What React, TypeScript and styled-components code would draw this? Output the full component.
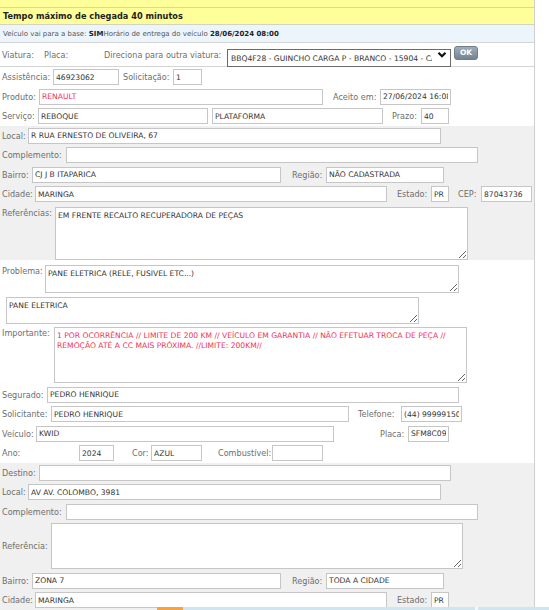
import React from "react";
import styled, { createGlobalStyle } from "styled-components";

const GlobalStyle = createGlobalStyle`
  html, body {
    margin: 0;
    padding: 0;
    background: #ffffff;
  }
  body {
    font-family: "DejaVu Sans", Verdana, sans-serif;
  }
`;

const Panel = styled.div`
  width: 534px;
  min-height: 610px;
  border-right: 1px solid #cfcfcf;
  font-family: "DejaVu Sans", Verdana, sans-serif;
`;

const TopBand = styled.div`
  height: 7px;
  background: #ffff99;
  border-bottom: 1px solid #d3d3c4;
`;

const Header = styled.div`
  height: 16px;
  display: flex;
  align-items: center;
  padding-left: 3px;
  background: #ffff99;
  border-bottom: 1px solid #d3d3c4;
  font-size: 8.2px;
  font-weight: bold;
  color: #222;
`;

const InfoBar = styled.div`
  height: 17px;
  display: flex;
  align-items: center;
  padding-left: 3px;
  background: #edf5fc;
  border-bottom: 1px solid #d4d4d4;
  font-size: 7px;
  color: #555;
  white-space: nowrap;
`;

const Strong = styled.b`
  color: #222;
`;

const ViaturaBar = styled.div`
  height: 23px;
  display: flex;
  align-items: center;
  border-bottom: 1px solid #d4d4d4;
`;

const Section = styled.div<{ $grey?: boolean; $pt?: number }>`
  background: ${(p) => (p.$grey ? "#f0f0f0" : "#ffffff")};
  padding-top: ${(p) => p.$pt ?? 0}px;
`;

const Row = styled.div<{ $h?: number; $top?: boolean; $mt?: number; $mb?: number }>`
  display: flex;
  align-items: ${(p) => (p.$top ? "flex-start" : "center")};
  height: ${(p) => p.$h ?? 19.5}px;
  margin-top: ${(p) => p.$mt ?? 0}px;
  margin-bottom: ${(p) => p.$mb ?? 0}px;
`;

const Label = styled.span<{ $ml?: number; $w: number; $pt?: number }>`
  flex: none;
  margin-left: ${(p) => p.$ml ?? 2}px;
  width: ${(p) => p.$w}px;
  padding-top: ${(p) => p.$pt ?? 0}px;
  font-size: 8.1px;
  color: #6e6e6e;
  white-space: nowrap;
`;

const Field = styled.input<{ $w: number; $ml?: number; $red?: boolean }>`
  flex: none;
  box-sizing: border-box;
  width: ${(p) => p.$w}px;
  height: 16px;
  margin: 0 0 0 ${(p) => p.$ml ?? 0}px;
  padding: 0 2px;
  border: 1px solid #c6c6c6;
  border-radius: 0;
  background: #fff;
  font-family: "DejaVu Sans", Verdana, sans-serif;
  font-size: 7.6px;
  color: ${(p) => (p.$red ? "#ee3355" : "#333")};
  outline: none;
`;

const Area = styled.textarea<{ $w: number; $h: number; $ml?: number; $red?: boolean }>`
  flex: none;
  box-sizing: border-box;
  width: ${(p) => p.$w}px;
  height: ${(p) => p.$h}px;
  margin: 0 0 0 ${(p) => p.$ml ?? 0}px;
  padding: 2.5px 2px;
  border: 1px solid #c6c6c6;
  background: #fff;
  font-family: "DejaVu Sans", Verdana, sans-serif;
  font-size: 7.6px;
  line-height: 10px;
  color: ${(p) => (p.$red ? "#ee3355" : "#333")};
  outline: none;
`;

const SelectWrap = styled.div`
  position: relative;
  flex: none;
  width: 224px;
  height: 18px;
`;

const Select = styled.select`
  box-sizing: border-box;
  width: 100%;
  height: 100%;
  margin: 0;
  padding: 0 18px 0 3px;
  border: 1px solid #6b6b6b;
  border-radius: 0;
  background: #fff;
  appearance: none;
  font-family: "DejaVu Sans", Verdana, sans-serif;
  font-size: 7.6px;
  color: #333;
  outline: none;
`;

const Chevron = styled.svg`
  position: absolute;
  right: 4px;
  top: 5px;
  pointer-events: none;
`;

const OkButton = styled.button`
  flex: none;
  align-self: flex-start;
  box-sizing: border-box;
  width: 24px;
  height: 14px;
  margin: 3px 0 0 3px;
  padding: 0;
  border: 1px solid #6f7e8a;
  border-radius: 3px;
  background: linear-gradient(#a0aebb, #74838f);
  color: #fff;
  font-family: "DejaVu Sans", Verdana, sans-serif;
  font-size: 7.5px;
  font-weight: bold;
  line-height: 12px;
`;

const BottomStrip = styled.div`
  position: fixed;
  left: 0;
  right: 0;
  bottom: 0;
  height: 3px;
  display: flex;
`;

const StripPart = styled.div<{ $w?: number; $c: string }>`
  flex: ${(p) => (p.$w ? "none" : "1")};
  width: ${(p) => (p.$w ? `${p.$w}px` : "auto")};
  background: ${(p) => p.$c};
`;

export default function App() {
  return (
    <>
      <GlobalStyle />
      <Panel>
        <TopBand />
        <Header>Tempo máximo de chegada 40 minutos</Header>
        <InfoBar>
          Veículo vai para a base:&nbsp;<Strong>SIM</Strong>Horário de entrega do veículo&nbsp;
          <Strong>28/06/2024 08:00</Strong>
        </InfoBar>
        <ViaturaBar>
          <Label $w={42}>Viatura:</Label>
          <Label $ml={0} $w={60}>Placa:</Label>
          <Label $ml={0} $w={123}>Direciona para outra viatura:</Label>
          <SelectWrap>
            <Select defaultValue="bbq">
              <option value="bbq">BBQ4F28 - GUINCHO CARGA P - BRANCO - 15904 - CAMINHÃO</option>
            </Select>
            <Chevron width="10" height="8" viewBox="0 0 10 8">
              <path d="M1.5 1.8 L5 5.3 L8.5 1.8" fill="none" stroke="#111" strokeWidth="2.2" />
            </Chevron>
          </SelectWrap>
          <OkButton>OK</OkButton>
        </ViaturaBar>

        <Section $pt={0.5}>
          <Row>
            <Label $w={51}>Assistência:</Label>
            <Field $w={66} readOnly value="46923062" />
            <Label $ml={4} $w={50}>Solicitação:</Label>
            <Field $w={29} readOnly value="1" />
          </Row>
          <Row>
            <Label $w={37}>Produto:</Label>
            <Field $w={284} readOnly value="RENAULT" $red />
            <Label $ml={10} $w={47}>Aceito em:</Label>
            <Field $w={71} readOnly value="27/06/2024 16:08" />
          </Row>
          <Row>
            <Label $w={36}>Serviço:</Label>
            <Field $w={170} readOnly value="REBOQUE" />
            <Field $w={171} $ml={4} readOnly value="PLATAFORMA" />
            <Label $ml={9} $w={29}>Prazo:</Label>
            <Field $w={28} readOnly value="40" />
          </Row>
        </Section>

        <Section $grey $pt={0}>
          <Row>
            <Label $w={26}>Local:</Label>
            <Field $w={413} readOnly value="R RUA ERNESTO DE OLIVEIRA, 67" />
          </Row>
          <Row>
            <Label $w={64}>Complemento:</Label>
            <Field $w={412} readOnly value="" />
          </Row>
          <Row>
            <Label $w={30}>Bairro:</Label>
            <Field $w={249} readOnly value="CJ J B ITAPARICA" />
            <Label $ml={11} $w={34}>Região:</Label>
            <Field $w={118} readOnly value="NÃO CADASTRADA" />
          </Row>
          <Row>
            <Label $w={33}>Cidade:</Label>
            <Field $w={352} readOnly value="MARINGA" />
            <Label $ml={10} $w={34}>Estado:</Label>
            <Field $w={18} readOnly value="PR" />
            <Label $ml={9} $w={23}>CEP:</Label>
            <Field $w={51} readOnly value="87043736" />
          </Row>
          <Row $top $h={53} $mt={3} $mb={3}>
            <Label $w={53} $pt={1}>Referências:</Label>
            <Area $w={413} $h={53} readOnly value="EM FRENTE RECALTO RECUPERADORA DE PEÇAS" />
          </Row>
        </Section>

        <Section $pt={2}>
          <Row $top $h={28}>
            <Label $w={43} $pt={1}>Problema:</Label>
            <Area $w={414} $h={28} readOnly value="PANE ELETRICA (RELE, FUSIVEL ETC...)" />
          </Row>
          <Row $top $h={27} $mt={4}>
            <Area $w={413} $h={27} $ml={6} readOnly value="PANE ELETRICA" />
          </Row>
          <Row $top $h={56} $mt={3} $mb={2}>
            <Label $w={52} $pt={1}>Importante:</Label>
            <Area
              $w={413}
              $h={56}
              $red
              readOnly
              value="1 POR OCORRÊNCIA // LIMITE DE 200 KM // VEÍCULO EM GARANTIA // NÃO EFETUAR TROCA DE PEÇA // REMOÇÃO ATÉ A CC MAIS PRÓXIMA. //LIMITE: 200KM//"
            />
          </Row>
          <Row>
            <Label $w={45}>Segurado:</Label>
            <Field $w={412} readOnly value="PEDRO HENRIQUE" />
          </Row>
          <Row>
            <Label $w={49}>Solicitante:</Label>
            <Field $w={298} readOnly value="PEDRO HENRIQUE" />
            <Label $ml={9} $w={43}>Telefone:</Label>
            <Field $w={61} readOnly value="(44) 999991500" />
          </Row>
          <Row>
            <Label $w={34}>Veículo:</Label>
            <Field $w={298} readOnly value="KWID" />
            <Label $ml={46} $w={28}>Placa:</Label>
            <Field $w={41} readOnly value="SFM8C09" />
          </Row>
          <Row>
            <Label $w={77}>Ano:</Label>
            <Field $w={35} readOnly value="2024" />
            <Label $ml={18} $w={19}>Cor:</Label>
            <Field $w={51} readOnly value="AZUL" />
            <Label $ml={16} $w={54}>Combustível:</Label>
            <Field $w={51} readOnly value="" />
          </Row>
        </Section>

        <Section $grey>
          <Row>
            <Label $w={37}>Destino:</Label>
            <Field $w={412} readOnly value="" />
          </Row>
          <Row>
            <Label $w={26}>Local:</Label>
            <Field $w={413} readOnly value="AV AV. COLOMBO, 3981" />
          </Row>
          <Row>
            <Label $w={64}>Complemento:</Label>
            <Field $w={412} readOnly value="" />
          </Row>
          <Row $h={46} $mt={1.5} $mb={2}>
            <Label $w={49}>Referência:</Label>
            <Area $w={412} $h={46} readOnly value="" />
          </Row>
          <Row>
            <Label $w={30}>Bairro:</Label>
            <Field $w={249} readOnly value="ZONA 7" />
            <Label $ml={11} $w={34}>Região:</Label>
            <Field $w={118} readOnly value="TODA A CIDADE" />
          </Row>
          <Row>
            <Label $w={33}>Cidade:</Label>
            <Field $w={352} readOnly value="MARINGA" />
            <Label $ml={10} $w={34}>Estado:</Label>
            <Field $w={18} readOnly value="PR" />
          </Row>
        </Section>
      </Panel>
      <BottomStrip>
        <StripPart $w={157} $c="transparent" />
        <StripPart $w={26} $c="#f4a340" />
        <StripPart $w={292} $c="#cfe6f0" />
        <StripPart $w={3} $c="#f4f8fa" />
        <StripPart $c="#cfe6f0" />
      </BottomStrip>
    </>
  );
}
